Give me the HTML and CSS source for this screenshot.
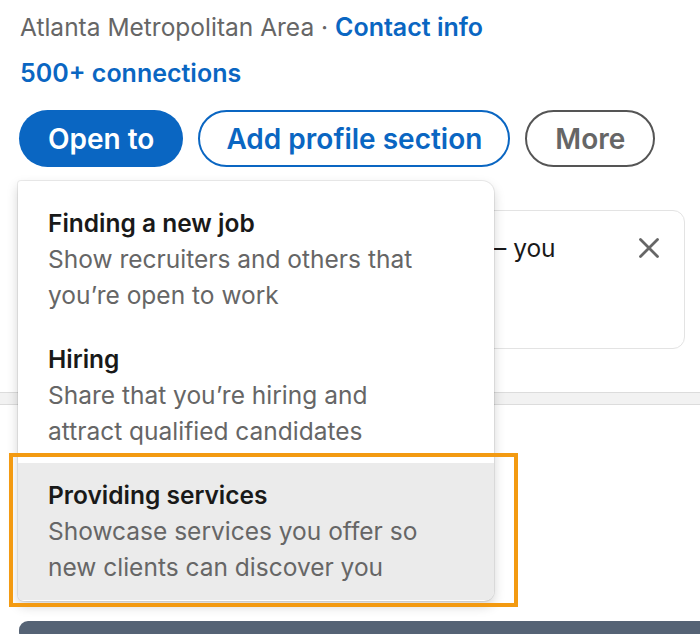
FILE: index.html
```html
<!DOCTYPE html>
<html lang="en">
<head>
<meta charset="utf-8">
<link rel="stylesheet" href="styles.css">
</head>
<body>
  <section class="intro">
    <p class="location">Atlanta Metropolitan Area · <a class="link" href="#">Contact info</a></p>
    <p class="connections"><a class="link" href="#">500+ connections</a></p>
    <div class="actions">
      <button class="btn btn-primary">Open to</button>
      <button class="btn btn-outline">Add profile section</button>
      <button class="btn btn-muted">More</button>
    </div>
    <div class="notice">
      <p class="notice-text">– you</p>
      <span class="notice-close" aria-label="Dismiss">
        <svg width="22" height="22" viewBox="0 0 22 22"><path d="M2.5 2.5 L19.5 19.5 M19.5 2.5 L2.5 19.5" stroke="#666" stroke-width="2.8" stroke-linecap="round" fill="none"/></svg>
      </span>
    </div>
  </section>
  <div class="band"></div>
  <div class="spacer"></div>
  <div class="bottom-bar"></div>

  <div class="menu">
    <div class="menu-item">
      <div class="menu-title">Finding a new job</div>
      <div class="menu-desc">Show recruiters and others that<br>you’re open to work</div>
    </div>
    <div class="menu-item">
      <div class="menu-title">Hiring</div>
      <div class="menu-desc">Share that you’re hiring and<br>attract qualified candidates</div>
    </div>
    <div class="menu-item active">
      <div class="menu-title">Providing services</div>
      <div class="menu-desc">Showcase services you offer so<br>new clients can discover you</div>
    </div>
  </div>
  <div class="highlight-frame"></div>
</body>
</html>
```

FILE: styles.css
```css
* { box-sizing: border-box; }
html, body { margin: 0; padding: 0; background: #fff; }
body {
  position: relative;
  width: 700px;
  height: 634px;
  overflow: hidden;
  font-family: Inter, "Noto Sans", "Liberation Sans", sans-serif;
  color: rgba(0,0,0,0.9);
}
.intro { padding: 9px 15px 0 20px; }
p { margin: 0; }
.location {
  font-size: 24.5px;
  line-height: 36px;
  color: #666;
}
.link { color: #0a66c2; font-weight: 600; text-decoration: none; font-size: 25px; }
.connections { font-size: 25px; line-height: 36px; margin-top: 10px; }
.actions { display: flex; gap: 15px; margin-top: 19px; margin-left: -1px; }
.btn {
  height: 57px;
  border-radius: 29px;
  font-family: inherit;
  font-size: 28px;
  font-weight: 600;
  padding: 0 26px;
  background: #fff;
  cursor: pointer;
}
.btn-primary { background: #0a66c2; color: #fff; border: 0; padding: 0 29px; }
.btn-outline { border: 2px solid #0a66c2; color: #0a66c2; }
.btn-muted { border: 2px solid #555; color: #666; padding: 0 28px; }
.notice {
  margin-top: 43px;
  height: 139px;
  border: 1px solid #e3e3e3;
  border-radius: 12px;
  display: flex;
  align-items: flex-start;
  padding: 19px 24px 0 473px;
  gap: 20px;
}
.notice-text { font-size: 24.5px; line-height: 36px; color: #191919; flex: 1; white-space: nowrap; }
.notice-close { display: flex; margin-top: 7px; }
.band {
  margin-top: 43px;
  height: 13px;
  background: #f2f2f2;
  border-top: 1px solid #dcdcdc;
  border-bottom: 1px solid #dcdcdc;
}
.spacer { height: 216px; }
.bottom-bar {
  margin-left: 19px;
  height: 20px;
  background: #556375;
  border-radius: 9px 0 0 9px;
}
.menu {
  position: absolute;
  left: 18px;
  top: 181px;
  width: 476px;
  height: 420px;
  background: #fff;
  border-radius: 3px 12px 10px 6px;
  box-shadow: 0 0 0 1px rgba(0,0,0,0.07), 0 5px 12px rgba(0,0,0,0.18);
  padding: 10px 0 0;
  overflow: hidden;
}
.menu-item { padding: 14px 20px 14px 30px; }
.menu-item.active { background: #ebebeb; padding-bottom: 15px; }
.menu-title { font-size: 24.5px; line-height: 36px; font-weight: 600; color: #191919; }
.menu-desc { font-size: 24.5px; line-height: 36px; color: #666; }
.highlight-frame {
  position: absolute;
  left: 9px;
  top: 453px;
  width: 509px;
  height: 154px;
  border: 4px solid #f39a11;
}
```
